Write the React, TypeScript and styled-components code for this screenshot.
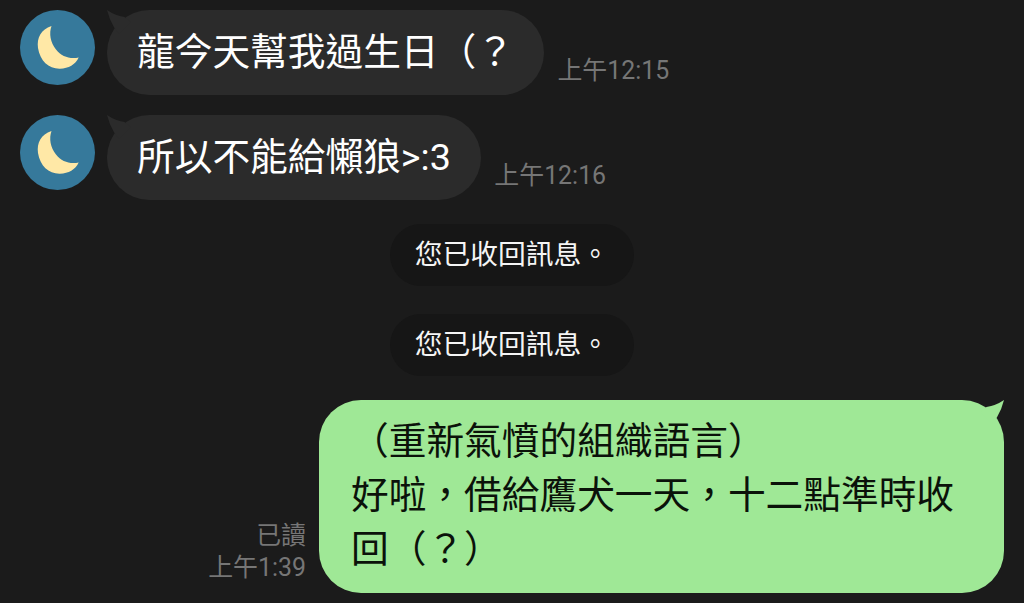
import styled, { createGlobalStyle } from "styled-components";

interface IMessage {
  id: number;
  text: string;
  time: string;
}

const received: IMessage[] = [
  { id: 1, text: "龍今天幫我過生日（？", time: "上午12:15" },
  { id: 2, text: "所以不能給懶狼>:3", time: "上午12:16" },
];

const notices = ["您已收回訊息。", "您已收回訊息。"];

const reply = {
  lines: ["（重新氣憤的組織語言）", "好啦，借給鷹犬一天，十二點準時收回（？）"],
  status: "已讀",
  time: "上午1:39",
};

function Moon() {
  return (
    <Avatar viewBox="0 0 75 75">
      <circle cx="37.5" cy="37.5" r="37.5" fill="#36799b" />
      <path
        d="M31.500 16C21 19.500 16.500 28 18 38C20 51 29 59 40 58.700C48.500 58.500 55.500 54.500 58.700 47.500C50 49.500 41.500 46.500 36 39.500C30.500 32.500 28.800 23.500 31.500 16Z"
        fill="#ffe8a6"
      />
    </Avatar>
  );
}

function BubbleTail({ mine = false }: { mine?: boolean }) {
  return (
    <Tail $mine={mine} viewBox="0 0 24 24">
      <path d="M0 0Q8 5.500 17.500 7L24 12L12 24L7 17.300Q2.500 10 0 0Z" />
    </Tail>
  );
}

export default function App() {
  return (
    <Chat lang="zh-Hant">
      <GlobalStyle />
      {received.map((message) => (
        <Row key={message.id}>
          <Moon />
          <Bubble>
            <BubbleTail />
            {message.text}
          </Bubble>
          <Time>{message.time}</Time>
        </Row>
      ))}
      <Notices>
        {notices.map((notice, i) => (
          <Notice key={i}>{notice}</Notice>
        ))}
      </Notices>
      <MyRow>
        <Meta>
          <div>{reply.status}</div>
          <div>{reply.time}</div>
        </Meta>
        <MyBubble>
          <BubbleTail mine />
          {reply.lines.map((line) => (
            <p key={line}>{line}</p>
          ))}
        </MyBubble>
      </MyRow>
    </Chat>
  );
}

const GlobalStyle = createGlobalStyle`
  * {
    box-sizing: border-box;
  }
  body {
    margin: 0;
    background-color: #1b1b1b;
  }
  p {
    margin: 0;
  }
`;

const Chat = styled.main`
  height: 603px;
  padding: 10px 20px 0;
  overflow: hidden;
  background-color: #1b1b1b;
  font-family: Roboto, "Noto Sans CJK TC", sans-serif;
`;

const Row = styled.div`
  display: flex;
  height: 85px;
  margin-bottom: 20px;
`;

const Avatar = styled.svg`
  width: 75px;
  height: 75px;
  margin-right: 12px;
  flex-shrink: 0;
`;

const Bubble = styled.div`
  position: relative;
  padding: 0 30.5px 0 30px;
  border-radius: 42.5px;
  background-color: #2b2b2b;
  color: #fff;
  fill: #2b2b2b;
  font-size: 37.7px;
  line-height: 84px;
  white-space: nowrap;
`;

const Tail = styled.svg<{ $mine: boolean }>`
  position: absolute;
  top: 0;
  ${(props) => (props.$mine ? "right: 0; transform: scaleX(-1);" : "left: 0;")}
  width: 24px;
  height: 24px;
`;

const Time = styled.div`
  align-self: flex-end;
  margin: 0 0 8px 13px;
  color: #767676;
  font-size: 24.9px;
  line-height: 32px;
  white-space: nowrap;
`;

const Notices = styled.div`
  display: flex;
  flex-direction: column;
  align-items: center;
  gap: 28px;
  padding-top: 4px;
`;

const Notice = styled.div`
  height: 62px;
  padding: 0 25px;
  border-radius: 31px;
  background-color: #161616;
  color: #f5f5f5;
  font-size: 27.75px;
  line-height: 62px;
`;

const MyRow = styled.div`
  display: flex;
  justify-content: flex-end;
  align-items: flex-end;
  margin-top: 24px;
`;

const Meta = styled.div`
  margin: 0 13px 9px 0;
  color: #767676;
  font-size: 24.9px;
  line-height: 32px;
  text-align: right;
`;

const MyBubble = styled.div`
  position: relative;
  width: 685px;
  height: 193px;
  padding: 14px 48px 0 32px;
  border-radius: 42px;
  background-color: #9fe896;
  color: #0b120a;
  fill: #9fe896;
  font-size: 37.7px;
  line-height: 54px;
`;
